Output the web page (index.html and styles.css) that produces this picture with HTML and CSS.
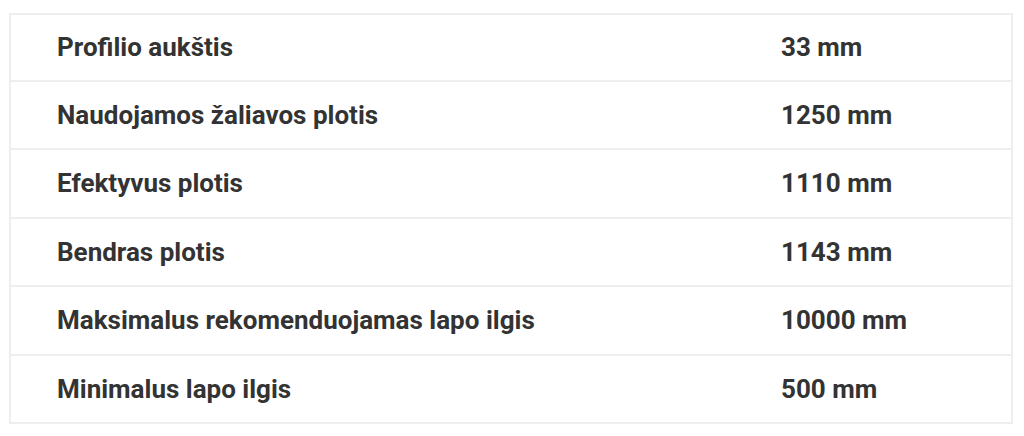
FILE: index.html
```html
<!DOCTYPE html>
<html lang="lt">
<head>
<meta charset="utf-8">
<link rel="stylesheet" href="styles.css">
</head>
<body>
<table class="specs">
  <tbody>
    <tr><td class="label">Profilio aukštis</td><td class="value">33 mm</td></tr>
    <tr><td class="label">Naudojamos žaliavos plotis</td><td class="value">1250 mm</td></tr>
    <tr><td class="label">Efektyvus plotis</td><td class="value">1110 mm</td></tr>
    <tr><td class="label">Bendras plotis</td><td class="value">1143 mm</td></tr>
    <tr><td class="label">Maksimalus rekomenduojamas lapo ilgis</td><td class="value">10000 mm</td></tr>
    <tr><td class="label">Minimalus lapo ilgis</td><td class="value">500 mm</td></tr>
  </tbody>
</table>
</body>
</html>
```
FILE: styles.css
```css
html, body {
  margin: 0;
  padding: 0;
  background: #ffffff;
}
body {
  padding: 13px 0 0 9px;
  font-family: Roboto, "Liberation Sans", sans-serif;
}
.specs {
  width: 1004px;
  border-collapse: collapse;
  border: 2px solid #eeeeee;
}
.specs td {
  border-top: 2px solid #eeeeee;
  height: 68.5px;
  padding: 0;
  box-sizing: border-box;
  font-size: 26px;
  font-weight: 700;
  color: #333333;
  vertical-align: middle;
  line-height: 30px;
}
.specs tr:first-child td {
  height: 66.5px;
}
.specs .label {
  width: 771px;
  padding-left: 46px;
}
.specs .value {
  padding-left: 0;
}
```
